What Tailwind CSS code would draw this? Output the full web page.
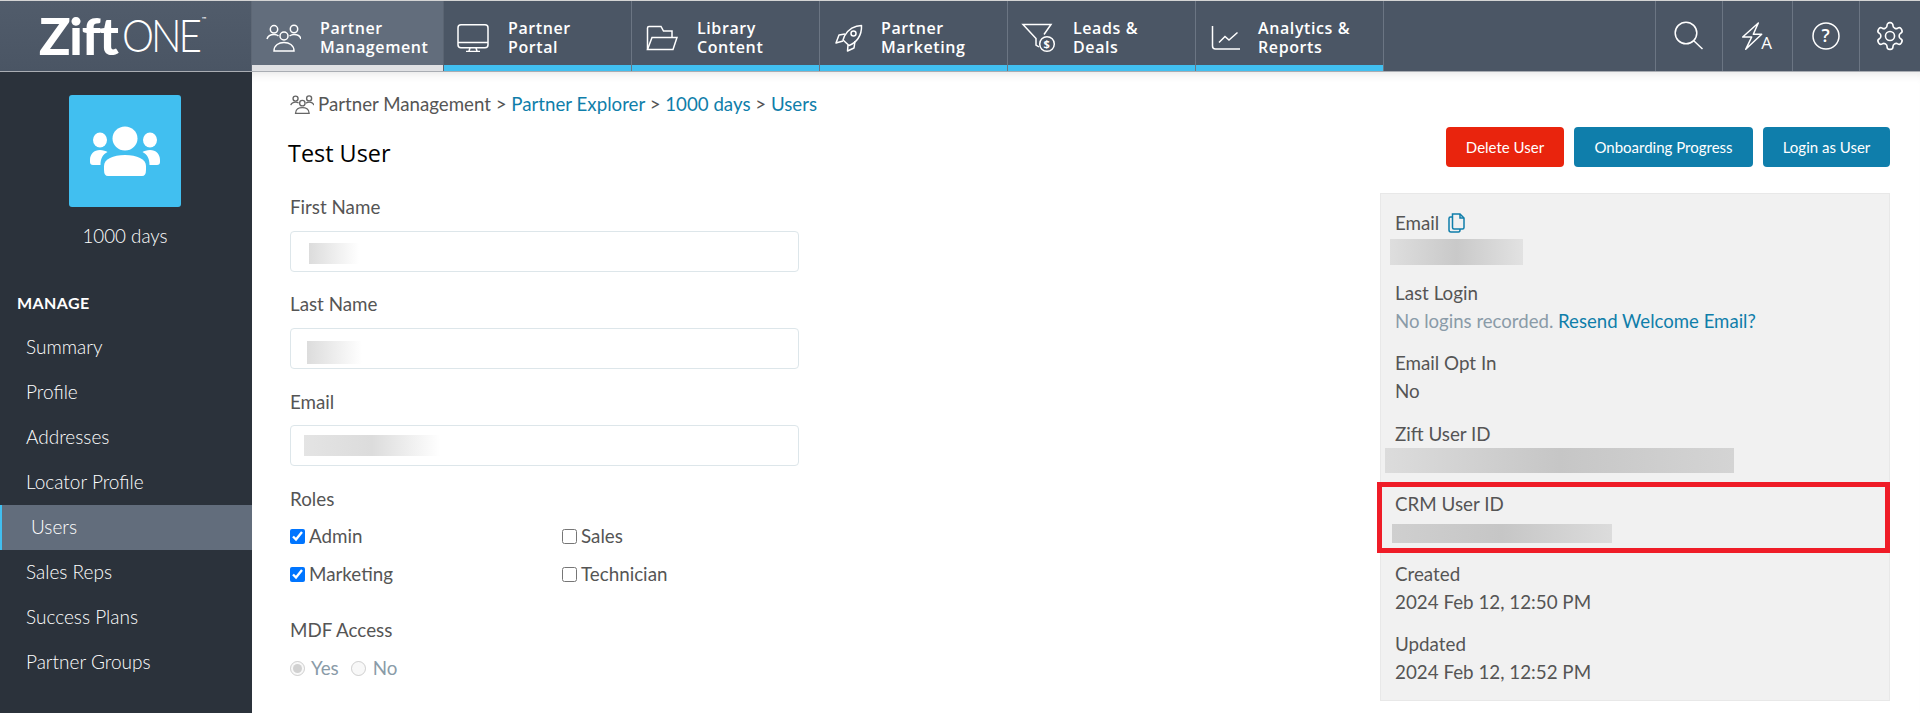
<!DOCTYPE html>
<html lang="en">
<head>
  <meta charset="UTF-8" />
  <title>ZiftONE – Test User</title>
  <script src="https://cdn.jsdelivr.net/npm/@tailwindcss/browser@4"></script>
</head>
<body class="h-[713px] overflow-hidden bg-white text-[#555] font-[family-name:Lato,sans-serif] text-[18.8px]">

  <!-- top nav -->
  <header class="flex h-[72px] bg-[#4b5665] border-t border-t-[#d4d4d4] border-b border-b-[#a9adb3] text-white font-[family-name:'Open_Sans',sans-serif] font-semibold text-[16px] leading-[19px] tracking-[0.6px]">
    <div class="w-[252px] shrink-0 flex items-start pl-[39px] bg-gradient-to-b from-[#515c6b] to-[#4a5564] border-r border-r-[#5d6775] font-[family-name:Lato,sans-serif] tracking-normal">
      <span class="text-[52px] leading-[68px] font-black tracking-[-1.2px]">Zift</span>
      <span class="ml-[4px] text-[46px] leading-[68px] font-light tracking-[-3.5px] origin-left scale-x-[0.88]">ONE</span>
      <span class="-ml-[7px] mt-[14px] text-[6px] leading-[8px]">™</span>
    </div>

    <a class="w-[192px] shrink-0 flex flex-col bg-[#626d7c] border-r border-r-[#5a6472]">
      <div class="flex-1 flex items-center pt-[9px] pl-[14px]">
        <svg class="w-[35px] h-[28px] shrink-0" viewBox="0 0 35 28" fill="none" stroke="currentColor" stroke-width="1.5">
          <circle cx="8" cy="5.3" r="3.7" /><circle cx="28" cy="5" r="3.7" /><circle cx="18" cy="12" r="4" />
          <path d="M1 15C2 11.5 5 10.5 8 10.5 10 10.5 11.5 11 12.5 12" /><path d="M23.5 12C25 11 26.5 10.5 28 10.5 31 10.5 34 11.5 35 15" />
          <path d="M8 27C8 21 13 18.5 18 18.5 23 18.5 28 21 28 27Z" />
        </svg>
        <span class="ml-[19px]">Partner<br />Management</span>
      </div>
      <div class="h-[6px] bg-[#e0e1e4]"></div>
    </a>

    <a class="w-[188px] shrink-0 flex flex-col border-r border-r-[#6b7583]">
      <div class="flex-1 flex items-center pt-[9px] pl-[13px]">
        <svg class="w-[32px] h-[28px] shrink-0" viewBox="0 0 32 28" fill="none" stroke="currentColor" stroke-width="1.5">
          <rect x="1" y="0.8" width="30" height="23" rx="3" /><path d="M1 18.5H31M13 24 12 27M19 24 20 27M9 27.5H23" />
        </svg>
        <span class="ml-[19px]">Partner<br />Portal</span>
      </div>
      <div class="h-[6px] bg-[#41bff0]"></div>
    </a>

    <a class="w-[188px] shrink-0 flex flex-col border-r border-r-[#6b7583]">
      <div class="flex-1 flex items-center pt-[9px] pl-[14px]">
        <svg class="w-[32px] h-[26px] shrink-0" viewBox="0 0 32 26" fill="none" stroke="currentColor" stroke-width="1.5">
          <path d="M1.5 24.5V3Q1.5 1.5 3 1.5H15L17.5 6H26V12.5" /><path d="M6 12.5H31L27 24.5H1.5Z" />
        </svg>
        <span class="ml-[19px]">Library<br />Content</span>
      </div>
      <div class="h-[6px] bg-[#41bff0]"></div>
    </a>

    <a class="w-[188px] shrink-0 flex flex-col border-r border-r-[#6b7583]">
      <div class="flex-1 flex items-center pt-[9px] pl-[15px]">
        <svg class="w-[28px] h-[28px] shrink-0" viewBox="0 0 28 28" fill="none" stroke="currentColor" stroke-width="1.5" stroke-linejoin="round">
          <path d="M26.5 1.5C20 1.5 13 5 9.5 12L8 16 14 21.5C21 19 27 12 26.5 1.5Z" /><circle cx="18.5" cy="9.5" r="2.5" />
          <path d="M10 10 4 11 1 19 8 17" /><path d="M13 21 12.5 27 19 24 20 17" />
        </svg>
        <span class="ml-[18px]">Partner<br />Marketing</span>
      </div>
      <div class="h-[6px] bg-[#41bff0]"></div>
    </a>

    <a class="w-[188px] shrink-0 flex flex-col border-r border-r-[#6b7583]">
      <div class="flex-1 flex items-center pt-[9px] pl-[13px]">
        <svg class="w-[36px] h-[30px] shrink-0" viewBox="0 0 36 30" fill="none" stroke="currentColor" stroke-width="1.5">
          <path d="M23 11.5 30 1.5H2L15 15.5V22L18 24" /><circle cx="26" cy="21" r="7.3" />
          <text x="26" y="25" text-anchor="middle" font-size="11" font-weight="700" fill="currentColor" stroke="none">$</text>
        </svg>
        <span class="ml-[16px]">Leads &amp;<br />Deals</span>
      </div>
      <div class="h-[6px] bg-[#41bff0]"></div>
    </a>

    <a class="w-[188px] shrink-0 flex flex-col border-r border-r-[#6b7583]">
      <div class="flex-1 flex items-center pt-[9px] pl-[15px]">
        <svg class="w-[30px] h-[26px] shrink-0" viewBox="0 0 30 26" fill="none" stroke="currentColor" stroke-width="1.5">
          <path d="M1.5 1V21Q1.5 24 4.5 24H29" /><path d="M8 17.5 14 11.5 18 15 26.5 7.5" />
        </svg>
        <span class="ml-[17px]">Analytics &amp;<br />Reports</span>
      </div>
      <div class="h-[6px] bg-[#41bff0]"></div>
    </a>

    <div class="flex-1"></div>

    <a class="w-[67px] flex items-center justify-center border-l border-l-[#6b7583]">
      <svg class="w-[30px] h-[30px]" viewBox="0 0 30 30" fill="none" stroke="currentColor" stroke-width="1.5">
        <circle cx="12" cy="12" r="10.8" /><path d="M19.5 19.5 28.5 28" />
      </svg>
    </a>
    <a class="w-[70px] flex items-center justify-center border-l border-l-[#6b7583]">
      <svg class="w-[34px] h-[30px]" viewBox="0 0 34 30" fill="none" stroke="currentColor" stroke-width="1.5" stroke-linejoin="round">
        <path d="M17.3 2 1.7 16H10.7L4.7 28.3 20.7 13.3H12.3Z" />
        <text x="26" y="28" text-anchor="middle" font-size="17" font-weight="400" fill="currentColor" stroke="none">A</text>
      </svg>
    </a>
    <a class="w-[67px] flex items-center justify-center border-l border-l-[#6b7583]">
      <svg class="w-[28px] h-[28px]" viewBox="0 0 28 28" fill="none" stroke="currentColor" stroke-width="1.5">
        <circle cx="14" cy="14" r="13" />
        <text x="14" y="20" text-anchor="middle" font-size="18" font-weight="600" fill="currentColor" stroke="none">?</text>
      </svg>
    </a>
    <a class="w-[61px] flex items-center justify-center border-l border-l-[#6b7583]">
      <svg class="w-[32px] h-[32px]" viewBox="0 0 24 24" fill="none" stroke="currentColor" stroke-width="1.2">
        <path d="M12.22 2h-.44a2 2 0 0 0-2 2v.18a2 2 0 0 1-1 1.73l-.43.25a2 2 0 0 1-2 0l-.15-.08a2 2 0 0 0-2.73.73l-.22.38a2 2 0 0 0 .73 2.73l.15.1a2 2 0 0 1 1 1.72v.51a2 2 0 0 1-1 1.74l-.15.09a2 2 0 0 0-.73 2.73l.22.38a2 2 0 0 0 2.73.73l.15-.08a2 2 0 0 1 2 0l.43.25a2 2 0 0 1 1 1.73V20a2 2 0 0 0 2 2h.44a2 2 0 0 0 2-2v-.18a2 2 0 0 1 1-1.73l.43-.25a2 2 0 0 1 2 0l.15.08a2 2 0 0 0 2.73-.73l.22-.39a2 2 0 0 0-.73-2.73l-.15-.08a2 2 0 0 1-1-1.74v-.5a2 2 0 0 1 1-1.74l.15-.09a2 2 0 0 0 .73-2.73l-.22-.38a2 2 0 0 0-2.73-.73l-.15.08a2 2 0 0 1-2 0l-.43-.25a2 2 0 0 1-1-1.73V4a2 2 0 0 0-2-2z" />
        <circle cx="12" cy="12" r="3.4" />
      </svg>
    </a>
  </header>

  <div class="flex h-[641px]">
    <!-- sidebar -->
    <aside class="w-[252px] shrink-0 bg-[#2b323b] text-white overflow-hidden">
      <div class="ml-[69px] mt-[23px] w-[112px] h-[112px] rounded-[3px] bg-[#41bff0] flex items-center justify-center">
        <svg class="w-[72px] h-[50px]" viewBox="0 0 72 50" fill="currentColor">
          <ellipse cx="36" cy="12.5" rx="12.5" ry="12" /><ellipse cx="11" cy="14" rx="7" ry="7.5" /><ellipse cx="61" cy="14" rx="7" ry="7.5" />
          <path d="M15 44V40C15 33 24 29 36 29 48 29 57 33 57 40V44Q57 50 53 50H19Q15 50 15 44Z" />
          <path d="M1 34C1 28 5 24 11 24 14 24 17 25 18.5 26 14 28.5 11.5 32 11.5 39H4Q1 39 1 36Z" />
          <path d="M71 34C71 28 67 24 61 24 58 24 55 25 53.5 26 58 28.5 60.5 32 60.5 39H68Q71 39 71 36Z" />
        </svg>
      </div>
      <p class="mt-[17px] leading-[24px] text-center pr-[2px] font-light">1000 days</p>
      <p class="mt-[43px] pl-[17px] text-[16px] leading-[24px] font-bold tracking-[0.4px]">MANAGE</p>
      <nav class="mt-[10px] font-light text-[19px]">
        <a class="block h-[45px] leading-[44px] pl-[26px]">Summary</a>
        <a class="block h-[45px] leading-[44px] pl-[26px]">Profile</a>
        <a class="block h-[45px] leading-[44px] pl-[26px]">Addresses</a>
        <a class="block h-[45px] leading-[44px] pl-[26px]">Locator Profile</a>
        <a class="block h-[45px] leading-[44px] pl-[29px] bg-[#626d7c] border-l-2 border-l-[#41bff0]">Users</a>
        <a class="block h-[45px] leading-[44px] pl-[26px]">Sales Reps</a>
        <a class="block h-[45px] leading-[44px] pl-[26px]">Success Plans</a>
        <a class="block h-[45px] leading-[44px] pl-[26px]">Partner Groups</a>
        <a class="block mt-[23px] leading-[24px] pl-[26px]">Contacts</a>
      </nav>
    </aside>

    <!-- content -->
    <main class="flex-1 pl-[38px] pr-[30px] shadow-[inset_0_9px_10px_-7px_rgba(0,0,0,0.1)]">
      <div class="pt-[18px] flex items-center leading-[28px] text-[18.7px]">
        <svg class="w-[24px] h-[19px] mr-[4px] text-[#666]" viewBox="0 0 35 28" fill="none" stroke="currentColor" stroke-width="2">
          <circle cx="8" cy="5.3" r="3.7" /><circle cx="28" cy="5" r="3.7" /><circle cx="18" cy="12" r="4" />
          <path d="M1 15C2 11.5 5 10.5 8 10.5 10 10.5 11.5 11 12.5 12" /><path d="M23.5 12C25 11 26.5 10.5 28 10.5 31 10.5 34 11.5 35 15" />
          <path d="M8 27C8 21 13 18.5 18 18.5 23 18.5 28 21 28 27Z" />
        </svg>
        <span>Partner Management &gt; <a class="text-[#0f7eaa]">Partner Explorer</a> &gt; <a class="text-[#0f7eaa]">1000 days</a> &gt; <a class="text-[#0f7eaa]">Users</a></span>
      </div>

      <div class="mt-[9px] flex h-[40px]">
        <h1 class="mt-[10px] -ml-[2px] text-[23.4px] leading-[32px] text-black font-[family-name:'Open_Sans',sans-serif]">Test User</h1>
        <div class="ml-auto flex gap-[10px] text-white text-[15px]">
          <button class="w-[118px] h-[40px] rounded-[4px] bg-[#e9240d]">Delete User</button>
          <button class="w-[179px] h-[40px] rounded-[4px] bg-[#0f7eab]">Onboarding Progress</button>
          <button class="w-[127px] h-[40px] rounded-[4px] bg-[#0f7eab]">Login as User</button>
        </div>
      </div>

      <div class="mt-[26px] flex justify-between leading-[28px]">
        <!-- form -->
        <form class="w-[509px]">
          <label class="block">First Name</label>
          <div class="mt-[10px] h-[41px] border border-[#dde6ea] rounded-[4px] pl-[18px] pt-[11px]">
            <div class="w-[50px] h-[21px] bg-gradient-to-r from-[#dcdcdc] to-white"></div>
          </div>
          <label class="block mt-[18px]">Last Name</label>
          <div class="mt-[10px] h-[41px] border border-[#dde6ea] rounded-[4px] pl-[16px] pt-[12px]">
            <div class="w-[55px] h-[23px] bg-gradient-to-r from-[#dcdcdc] to-white"></div>
          </div>
          <label class="block mt-[19px]">Email</label>
          <div class="mt-[9px] h-[41px] border border-[#dde6ea] rounded-[4px] pl-[13px] pt-[9px]">
            <div class="w-[136px] h-[21px] bg-gradient-to-r from-[#e4e4e4] via-[#dcdcdc] to-white"></div>
          </div>

          <label class="block mt-[19px]">Roles</label>
          <div class="mt-[9px] grid grid-cols-[272px_1fr] gap-y-[10px]">
            <label class="flex items-center gap-[4px]"><input type="checkbox" checked class="w-[15px] h-[15px] m-0" />Admin</label>
            <label class="flex items-center gap-[4px]"><input type="checkbox" class="w-[15px] h-[15px] m-0" />Sales</label>
            <label class="flex items-center gap-[4px]"><input type="checkbox" checked class="w-[15px] h-[15px] m-0" />Marketing</label>
            <label class="flex items-center gap-[4px]"><input type="checkbox" class="w-[15px] h-[15px] m-0" />Technician</label>
          </div>

          <label class="block mt-[28px]">MDF Access</label>
          <div class="mt-[10px] flex items-center text-[#8a9ba8]">
            <input type="radio" name="mdf" checked disabled class="w-[15px] h-[15px] m-0" />
            <span class="ml-[6px]">Yes</span>
            <input type="radio" name="mdf" disabled class="w-[15px] h-[15px] m-0 ml-[12px]" />
            <span class="ml-[7px]">No</span>
          </div>
        </form>

        <!-- details panel -->
        <section class="relative w-[510px] h-[508px] bg-[#f1f1f1] border border-[#e8e8e8] pl-[14px] pt-[15px]">
          <div class="h-[70.2px]">
            <div class="flex items-center">Email
              <svg class="w-[17px] h-[20px] ml-[9px] text-[#0f7eaa]" viewBox="0 0 17 20" fill="none" stroke="currentColor" stroke-width="1.5">
                <path d="M4 4H2.5Q1 4 1 5.5V17Q1 19 3 19H10.5Q12 19 12 17V16" /><path d="M4.5 1H12L16 5V14.5Q16 16 14.5 16H6Q4.5 16 4.5 14.5Z" /><path d="M12 1V5H16" />
              </svg>
            </div>
            <div class="h-[26px] w-[133px] -ml-[5px] mt-[2px] bg-gradient-to-r from-[#dedede] via-[#c9c9c9] to-[#e2e2e2]"></div>
          </div>
          <div class="h-[70.2px]">
            <div>Last Login</div>
            <div class="text-[#8a9ba8] text-[18.6px]">No logins recorded. <a class="text-[#0f7eaa]">Resend Welcome Email?</a></div>
          </div>
          <div class="h-[70.2px]">
            <div>Email Opt In</div>
            <div>No</div>
          </div>
          <div class="h-[70.2px]">
            <div>Zift User ID</div>
            <div class="h-[25px] w-[349px] -ml-[10px] bg-gradient-to-r from-[#dcdcdc] via-[#c6c6c6] to-[#d4d4d4]"></div>
          </div>
          <div class="h-[70.2px]">
            <div>CRM User ID</div>
            <div class="h-[19px] w-[220px] -ml-[3px] mt-[6px] bg-gradient-to-r from-[#cfcfcf] via-[#c6c6c6] to-[#dcdcdc]"></div>
          </div>
          <div class="h-[70.2px]">
            <div>Created</div>
            <div>2024 Feb 12, 12:50 PM</div>
          </div>
          <div>
            <div>Updated</div>
            <div>2024 Feb 12, 12:52 PM</div>
          </div>
          <!-- red highlight drawn over the screenshot -->
          <div class="absolute left-[-4px] right-[-1px] top-[288px] h-[71px] border-[5px] border-[#ef1c27]"></div>
        </section>
      </div>
    </main>
  </div>
</body>
</html>
